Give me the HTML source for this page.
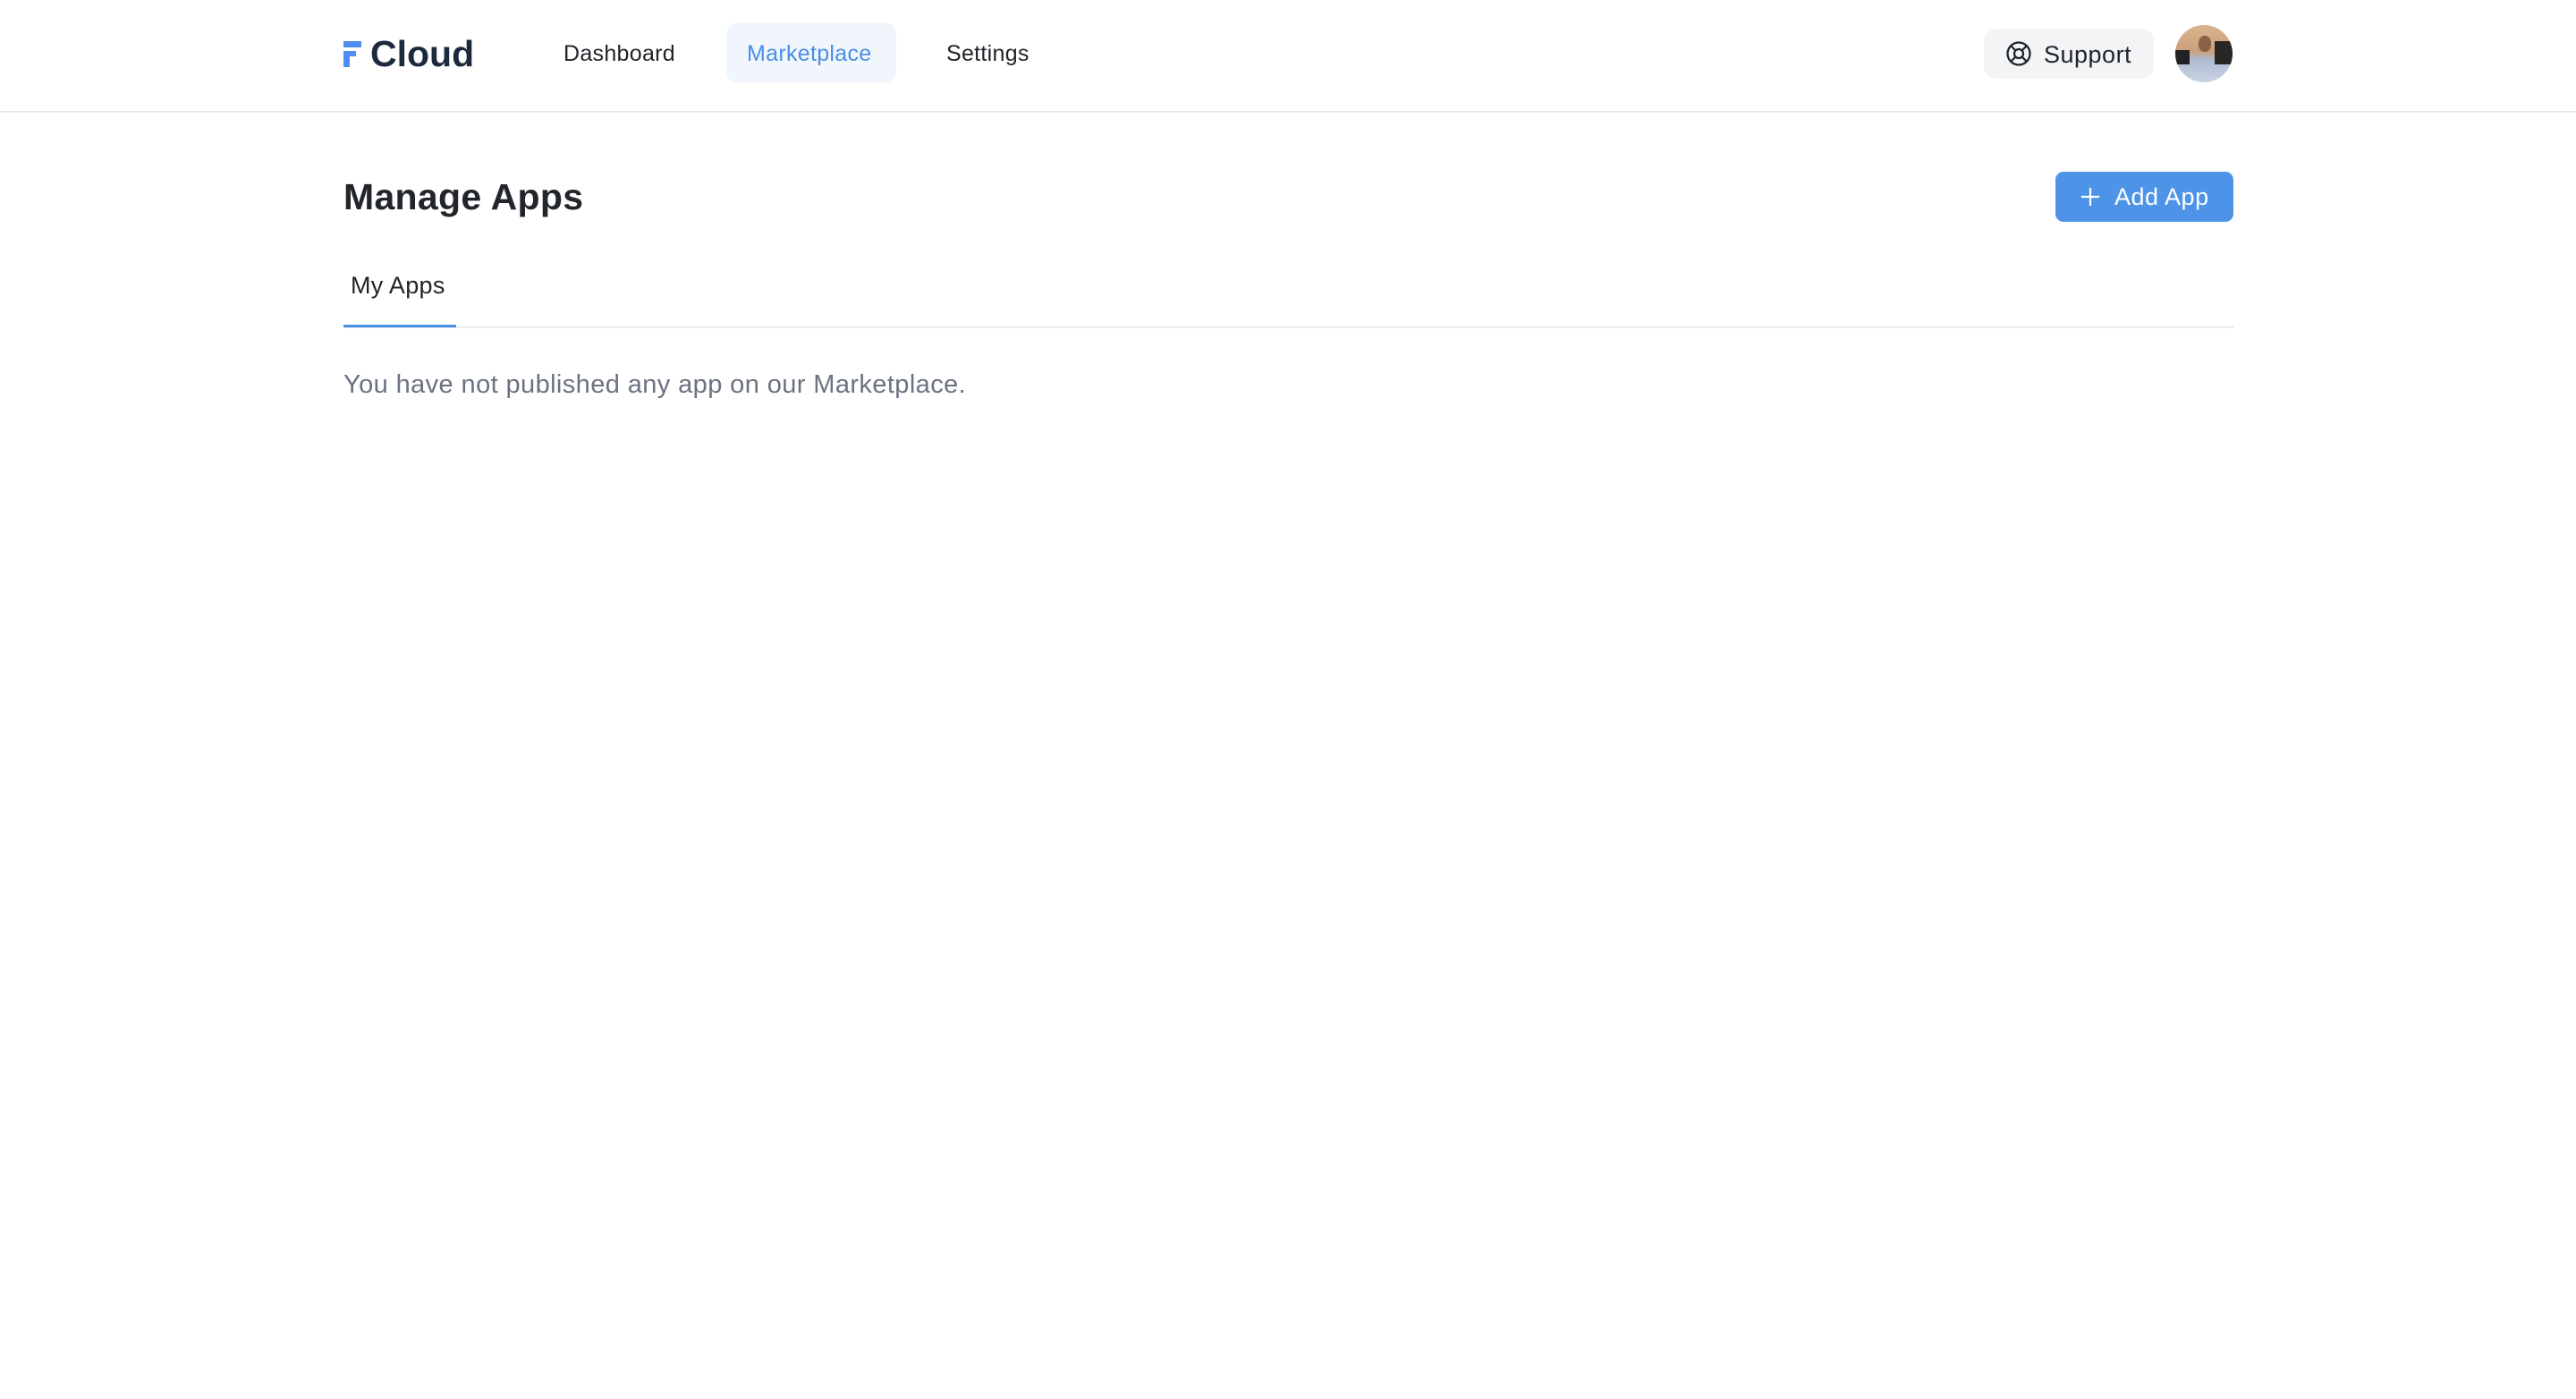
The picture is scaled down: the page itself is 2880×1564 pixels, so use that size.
<!DOCTYPE html>
<html><head><meta charset="utf-8"><style>
*{box-sizing:border-box;margin:0;padding:0}
body{width:2880px;height:1564px;background:#fff;font-family:"Liberation Sans",sans-serif;color:#1f2937;position:relative;overflow:hidden}
.abs{position:absolute}
.hdr{left:0;top:0;width:2880px;height:126px;border-bottom:2px solid #e8eaee}
.nav{font-size:25px;color:#1f2328;top:44px;line-height:32px;letter-spacing:0.3px}
</style></head><body>
<div class="abs hdr"></div>
<svg class="abs" style="left:384px;top:46px" width="20" height="29" viewBox="0 0 20 29"><rect x="0" y="0" width="20" height="7" fill="#4f8ef0"/><rect x="0" y="11" width="14" height="6" fill="#4f8ef0"/><rect x="0" y="11" width="7" height="18" fill="#4f8ef0"/></svg>
<div class="abs" style="left:414px;top:36px;font-size:41px;font-weight:bold;color:#1c2a3e;line-height:48px;letter-spacing:0px">Cloud</div>
<div class="abs nav" style="left:630px">Dashboard</div>
<div class="abs" style="left:812px;top:26px;width:190px;height:66px;background:#f0f6fc;border-radius:12px"></div>
<div class="abs nav" style="left:835px;color:#4a8fe6">Marketplace</div>
<div class="abs nav" style="left:1058px">Settings</div>
<div class="abs" style="left:2218px;top:32px;width:190px;height:56px;background:#f3f4f6;border-radius:14px"></div>
<svg class="abs" style="left:2242px;top:45px" width="30" height="30" viewBox="0 0 24 24" fill="none" stroke="#1f2328" stroke-width="1.8"><circle cx="12" cy="12" r="10"/><circle cx="12" cy="12" r="4"/><path d="M4.9 4.9l4.3 4.3M14.8 14.8l4.3 4.3M14.8 9.2l4.3-4.3M9.2 14.8l-4.3 4.3"/></svg>
<div class="abs" style="left:2285px;top:44px;font-size:27px;line-height:34px;color:#1f2328;letter-spacing:0.5px">Support</div>
<div class="abs" style="left:2432px;top:28px;width:64px;height:64px;border-radius:50%;overflow:hidden;background:linear-gradient(180deg,#d9b48e 0%,#caa07a 45%,#aebcd2 60%,#c9d3e2 100%)">
<div class="abs" style="left:0;top:28px;width:16px;height:16px;background:#222"></div>
<div class="abs" style="left:44px;top:18px;width:20px;height:26px;background:#2a2624"></div>
<div class="abs" style="left:26px;top:12px;width:14px;height:18px;border-radius:45%;background:#8a6248"></div>
</div>
<div class="abs" style="left:384px;top:196px;font-size:41px;font-weight:bold;color:#22262b;line-height:48px;letter-spacing:0.3px">Manage Apps</div>
<div class="abs" style="left:2298px;top:192px;width:199px;height:56px;background:#4d94e8;border-radius:9px"></div>
<svg class="abs" style="left:2325px;top:208px" width="24" height="24" viewBox="0 0 24 24" stroke="#fff" stroke-width="2.2"><path d="M12 2v20M2 12h20"/></svg>
<div class="abs" style="left:2364px;top:203px;font-size:27px;color:#fff;line-height:34px;letter-spacing:0.5px">Add App</div>
<div class="abs" style="left:392px;top:302px;font-size:27px;color:#1f2328;line-height:34px;letter-spacing:0.3px">My Apps</div>
<div class="abs" style="left:384px;top:365px;width:2113px;height:2px;background:#e8eaee"></div>
<div class="abs" style="left:384px;top:363px;width:126px;height:3px;background:#4a8fe6"></div>
<div class="abs" style="left:384px;top:412px;font-size:29px;color:#6b7280;line-height:36px;letter-spacing:0.4px">You have not published any app on our Marketplace.</div>
</body></html>
